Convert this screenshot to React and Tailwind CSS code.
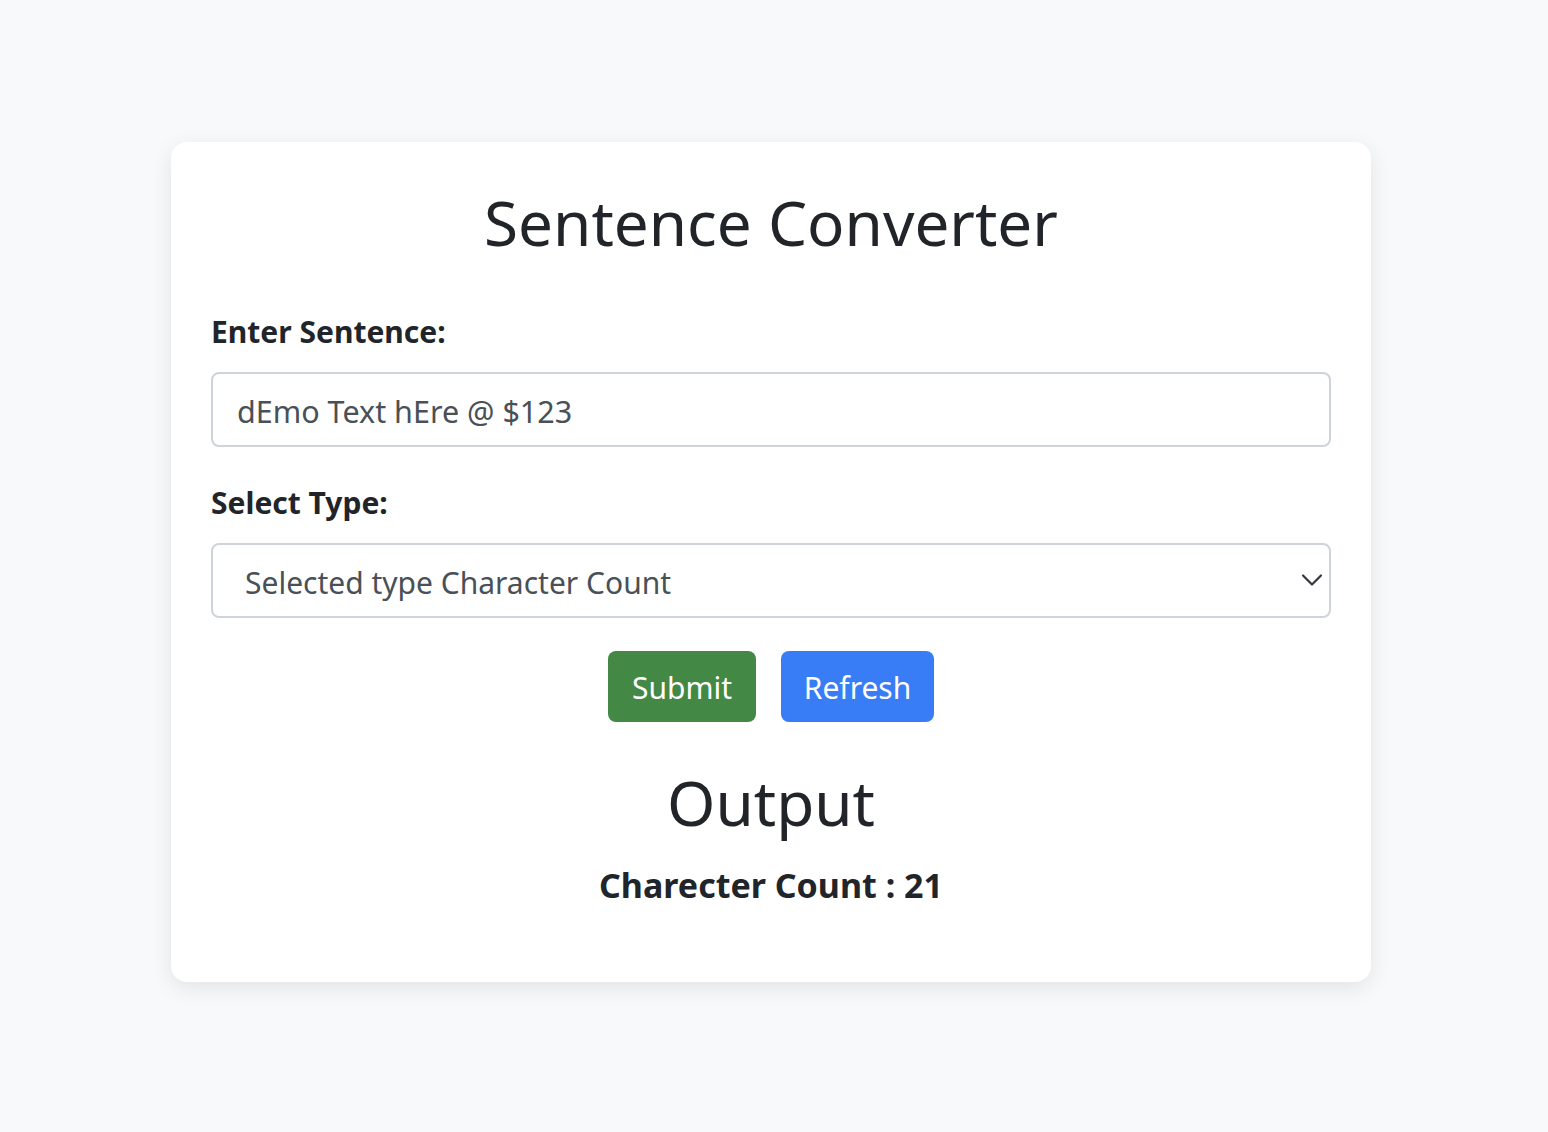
import React from "react";

export default function App() {
  const font = { fontFamily: '"Noto Sans", "Open Sans", sans-serif' };
  return (
    <div className="min-h-[1132px] bg-[#f8f9fa] pt-[142px]" style={font}>
      <div className="ml-[171px] w-[1200px] rounded-[16px] bg-white px-[40px] pt-[40px] pb-[73px] shadow-[0_6px_22px_rgba(0,0,0,0.09)] text-[#212529]">
        <h1 className="text-center text-[62px] leading-[80px] font-normal">Sentence Converter</h1>

        <label className="mt-[46px] block text-[30px] leading-[48px] font-bold">Enter Sentence:</label>
        <input
          readOnly
          value="dEmo Text hEre @ $123"
          className="mt-[16px] block h-[75px] w-full rounded-[8px] border-2 border-[#ced4da] bg-white px-[24px] pt-[2px] text-[30.5px] text-[#495057] outline-none"
        />

        <label className="mt-[32px] block text-[30px] leading-[48px] font-bold">Select Type:</label>
        <div className="relative mt-[16px]">
          <select
            className="block h-[75px] w-full appearance-none rounded-[8px] border-2 border-[#ced4da] bg-white pl-[32px] pr-[60px] pt-[4px] text-[30px] text-[#495057] outline-none"
            defaultValue="cc"
          >
            <option value="cc">Selected type Character Count</option>
          </select>
          <svg
            className="pointer-events-none absolute right-[7px] top-[25px] h-[24px] w-[24px]"
            viewBox="0 0 16 16"
            fill="none"
            stroke="#343a40"
            strokeWidth="1.5"
            strokeLinecap="round"
            strokeLinejoin="round"
          >
            <path d="m2 5 6 6 6-6" />
          </svg>
        </div>

        <div className="mt-[33px] flex justify-center gap-[25px]">
          <button className="h-[71px] w-[148px] rounded-[8px] bg-[#438844] pt-[2px] text-[30px] text-white">Submit</button>
          <button className="h-[71px] w-[153px] rounded-[8px] bg-[#387cf6] pt-[2px] text-[30px] text-white">Refresh</button>
        </div>

        <h2 className="mt-[40px] text-center text-[62px] leading-[80px] font-normal">Output</h2>
        <p className="mt-[19px] text-center text-[34px] leading-[48px] font-bold">Charecter Count : 21</p>
      </div>
    </div>
  );
}
